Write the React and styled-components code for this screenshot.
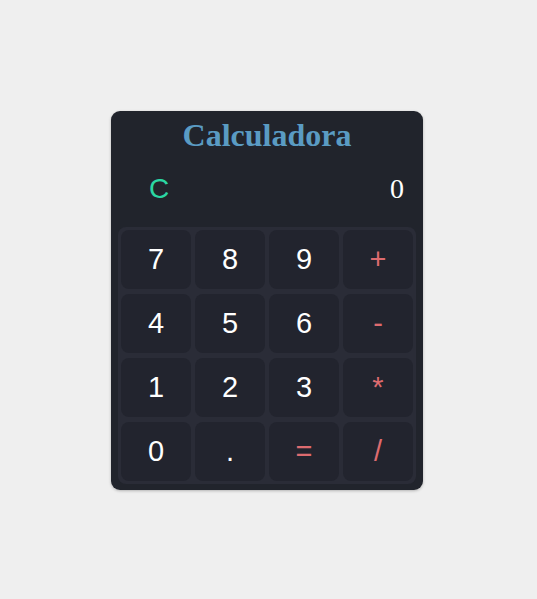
import React from "react";
import styled, { createGlobalStyle } from "styled-components";

const Global = createGlobalStyle`
  html, body { margin: 0; padding: 0; }
  body { background: #efefef; }
`;

const Page = styled.div`
  min-height: 599px;
  display: flex;
  align-items: center;
  justify-content: center;
  padding-right: 3px;
  padding-top: 1px;
  box-sizing: border-box;
`;

const Card = styled.div`
  width: 312px;
  box-sizing: border-box;
  padding: 6px 7px 6px;
  background: #21242c;
  border-radius: 9px;
  box-shadow: 0 1px 3px rgba(0, 0, 0, 0.25);
  display: flex;
  flex-direction: column;
`;

const Title = styled.h1`
  margin: 0;
  font-family: "Liberation Serif", "Times New Roman", serif;
  font-weight: bold;
  font-size: 32px;
  line-height: 36px;
  text-align: center;
  color: #5a9bc3;
`;

const Display = styled.div`
  height: 72px;
  display: flex;
  align-items: center;
  justify-content: space-between;
  padding: 0 12px 2px 31px;
`;

const Clear = styled.span`
  font-family: "Liberation Sans", Arial, sans-serif;
  font-size: 28px;
  color: #2bd6a3;
`;

const Value = styled.span`
  font-family: "Liberation Serif", "Times New Roman", serif;
  font-size: 28px;
  color: #ffffff;
`;

const Pad = styled.div`
  display: grid;
  grid-template-columns: repeat(4, 70px);
  grid-auto-rows: 59px;
  gap: 5px 4px;
  padding: 3px;
  background: #2a2c37;
  border-radius: 8px;
`;

const Key = styled.div`
  display: flex;
  align-items: center;
  justify-content: center;
  background: #22242e;
  border-radius: 8px;
  font-family: "Liberation Sans", Arial, sans-serif;
  font-size: 29px;
  color: ${(p) => (p.$op ? "#dd6b6f" : "#ffffff")};
`;

const keys = ["7", "8", "9", "+", "4", "5", "6", "-", "1", "2", "3", "*", "0", ".", "=", "/"];
const ops = new Set(["+", "-", "*", "/", "="]);

export default function App() {
  return (
    <>
      <Global />
      <Page>
        <Card>
          <Title>Calculadora</Title>
          <Display>
            <Clear>C</Clear>
            <Value>0</Value>
          </Display>
          <Pad>
            {keys.map((k) => (
              <Key key={k} $op={ops.has(k)}>
                {k}
              </Key>
            ))}
          </Pad>
        </Card>
      </Page>
    </>
  );
}
